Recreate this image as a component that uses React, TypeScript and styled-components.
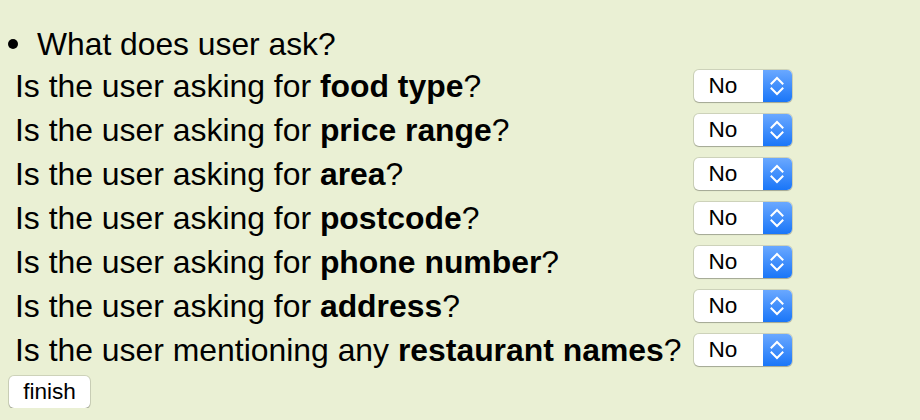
import React from "react";
import styled, { createGlobalStyle } from "styled-components";

const Global = createGlobalStyle`
  html, body { margin: 0; padding: 0; background: #eaf0d4; }
  body { font-family: "Liberation Sans", Arial, sans-serif; color: #000; }
`;

const Page = styled.div`
  padding: 26px 0 0 0;
`;

const Bullet = styled.div`
  display: flex;
  align-items: center;
  gap: 19px;
  padding-left: 8px;
  font-size: 31.8px;
  line-height: 36px;
  height: 36px;
`;

const Dot = styled.span`
  flex: none;
  width: 10px;
  height: 10px;
  border-radius: 50%;
  background: #000;
`;

const Grid = styled.div`
  display: grid;
  grid-template-columns: max-content max-content;
  column-gap: 12px;
  padding-left: 15px;
  margin-top: 2px;
`;

const Label = styled.div`
  font-size: 31.9px;
  height: 44px;
  line-height: 44px;
  white-space: nowrap;
`;

const Bold = styled.b`
  font-weight: bold;
`;

const Cell = styled.div`
  height: 44px;
  display: flex;
  align-items: center;
`;

const Select = styled.div`
  width: 98px;
  height: 32px;
  box-sizing: border-box;
  border-radius: 5px;
  background: #fff;
  box-shadow: 0 0 0 1px rgba(0, 0, 0, 0.12), 0 1px 1px rgba(0, 0, 0, 0.2);
  display: flex;
  overflow: hidden;
`;

const SelectText = styled.span`
  flex: 1;
  font-size: 22.6px;
  padding-left: 15px;
  display: flex;
  align-items: center;
`;

const Stepper = styled.span`
  width: 29px;
  background: linear-gradient(#6aa8ff, #1a76f8);
  display: flex;
  align-items: center;
  justify-content: center;
`;

const Finish = styled.button`
  display: block;
  margin: 4px 0 0 9px;
  width: 81px;
  height: 32px;
  border-radius: 5px;
  border: none;
  background: #fff;
  box-shadow: 0 0 0 1px rgba(0, 0, 0, 0.12), 0 1px 1px rgba(0, 0, 0, 0.25);
  font-family: "Liberation Sans", Arial, sans-serif;
  font-size: 22.6px;
  color: #000;
  padding: 0;
`;

const Chevrons = () => (
  <svg width="14" height="20" viewBox="0 0 14 20">
    <path d="M1.5 7.5 L7 2 L12.5 7.5" fill="none" stroke="#fff" strokeWidth="2" strokeLinecap="square" />
    <path d="M1.5 12.5 L7 18 L12.5 12.5" fill="none" stroke="#fff" strokeWidth="2" strokeLinecap="square" />
  </svg>
);

const rows: { pre: string; bold: string }[] = [
  { pre: "Is the user asking for ", bold: "food type" },
  { pre: "Is the user asking for ", bold: "price range" },
  { pre: "Is the user asking for ", bold: "area" },
  { pre: "Is the user asking for ", bold: "postcode" },
  { pre: "Is the user asking for ", bold: "phone number" },
  { pre: "Is the user asking for ", bold: "address" },
  { pre: "Is the user mentioning any ", bold: "restaurant names" },
];

export default function App() {
  return (
    <>
      <Global />
      <Page>
        <Bullet>
          <Dot />
          <span>What does user ask?</span>
        </Bullet>
        <Grid>
          {rows.map((r) => (
            <React.Fragment key={r.bold}>
              <Label>
                {r.pre}
                <Bold>{r.bold}</Bold>?
              </Label>
              <Cell>
                <Select>
                  <SelectText>No</SelectText>
                  <Stepper>
                    <Chevrons />
                  </Stepper>
                </Select>
              </Cell>
            </React.Fragment>
          ))}
        </Grid>
        <Finish>finish</Finish>
      </Page>
    </>
  );
}
